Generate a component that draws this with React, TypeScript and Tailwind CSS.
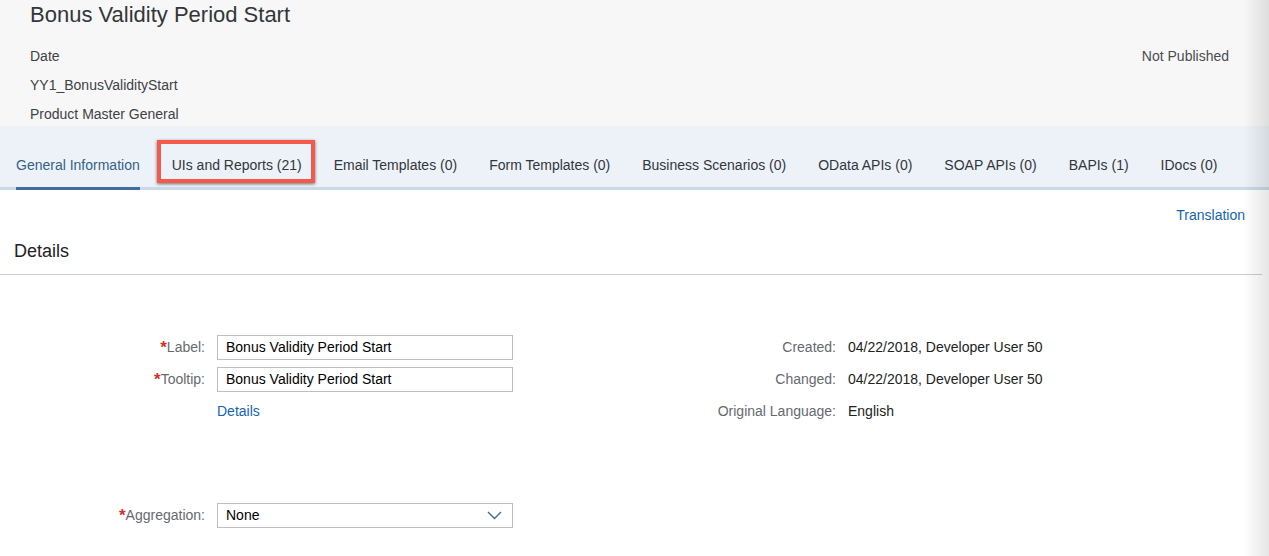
import React from "react";

const tabs = [
  "General Information",
  "UIs and Reports (21)",
  "Email Templates (0)",
  "Form Templates (0)",
  "Business Scenarios (0)",
  "OData APIs (0)",
  "SOAP APIs (0)",
  "BAPIs (1)",
  "IDocs (0)",
];

function Req({ text }: { text: string }) {
  return (
    <span className="text-[#666a6e]">
      <span className="text-[#d0312d] text-[17px] font-bold leading-[0] relative top-[1px]">*</span>
      {text}:
    </span>
  );
}

function Input({ value }: { value: string }) {
  return (
    <div className="h-[25px] w-[296px] border border-[#bfbfbf] bg-white flex items-center px-[8px] text-[#000]">
      {value}
    </div>
  );
}

export default function App() {
  return (
    <div
      className="relative w-[1269px] h-[556px] overflow-hidden bg-white text-[14px] text-[#32363a]"
      style={{ fontFamily: '"Liberation Sans", Arial, sans-serif' }}
    >
      {/* Header */}
      <div className="h-[126px] bg-[#f7f7f7] pl-[30px] pr-[40px]">
        <div className="text-[22px] leading-[28px] text-[#32363a] pt-[1px]">Bonus Validity Period Start</div>
        <div className="mt-[13px] flex justify-between leading-[29px] text-[#3f4245]">
          <div className="flex flex-col">
            <span>Date</span>
            <span>YY1_BonusValidityStart</span>
            <span>Product Master General</span>
          </div>
          <span className="text-[#4a4d50]">Not Published</span>
        </div>
      </div>

      {/* Tabs */}
      <div className="h-[64px] bg-[#edf2f9] border-b-[3px] border-[#cad9ea] pt-[14px] pl-[16px]">
        <div className="flex gap-[32px] h-full">
          {tabs.map((t, i) => (
            <div
              key={t}
              className={
                "relative flex items-center pt-[3px] h-[50px] border-b-[3px] whitespace-nowrap " +
                (i === 0 ? "border-[#3e6e9f] text-[#346187]" : "border-transparent text-[#32363a]")
              }
            >
              {t}
              {i === 1 && (
                <span className="absolute top-0 bottom-[4px] left-[-15px] right-[-13px] border-[4px] border-[#f45a4b] shadow-[0_1px_3px_rgba(0,0,0,0.55)]" />
              )}
            </div>
          ))}
        </div>
      </div>

      {/* Content */}
      <div className="pr-[7px]">
        <div className="flex justify-end pr-[17px] pt-[15px] leading-[20px]">
          <span className="text-[#1464b4]">Translation</span>
        </div>
        <div className="pl-[14px] pt-[15px] h-[50px] text-[18px] leading-[22px] text-[#222] border-b border-[#cccccc]">
          Details
        </div>

        <div className="flex pt-[56px]">
          <div className="grid grid-cols-[205px_296px] gap-x-[12px] auto-rows-[32px] items-center">
            <div className="text-right"><Req text="Label" /></div>
            <Input value="Bonus Validity Period Start" />
            <div className="text-right"><Req text="Tooltip" /></div>
            <Input value="Bonus Validity Period Start" />
            <div />
            <span className="text-[#1464b4]">Details</span>
          </div>
          <div className="ml-[122px] grid grid-cols-[201px_auto] gap-x-[12px] auto-rows-[32px] items-center">
            <span className="text-right text-[#666a6e]">Created:</span>
            <span className="text-[#222]">04/22/2018, Developer User 50</span>
            <span className="text-right text-[#666a6e]">Changed:</span>
            <span className="text-[#222]">04/22/2018, Developer User 50</span>
            <span className="text-right text-[#666a6e]">Original Language:</span>
            <span className="text-[#222]">English</span>
          </div>
        </div>

        <div className="mt-[72px] grid grid-cols-[205px_296px] gap-x-[12px] auto-rows-[32px] items-center">
          <div className="text-right"><Req text="Aggregation" /></div>
          <div className="h-[25px] w-[296px] border border-[#bfbfbf] bg-white flex items-center justify-between pl-[8px] pr-[10px] text-[#000]">
            <span>None</span>
            <svg width="15" height="9" viewBox="0 0 15 9" fill="none">
              <polyline points="1,1 7.5,7.5 14,1" stroke="#3f6b96" strokeWidth="1.4" />
            </svg>
          </div>
        </div>
      </div>

      {/* right edge shadow */}
      <div className="absolute top-0 right-0 h-full w-[26px] bg-gradient-to-r from-transparent to-[rgba(0,0,0,0.1)] pointer-events-none" />
    </div>
  );
}
